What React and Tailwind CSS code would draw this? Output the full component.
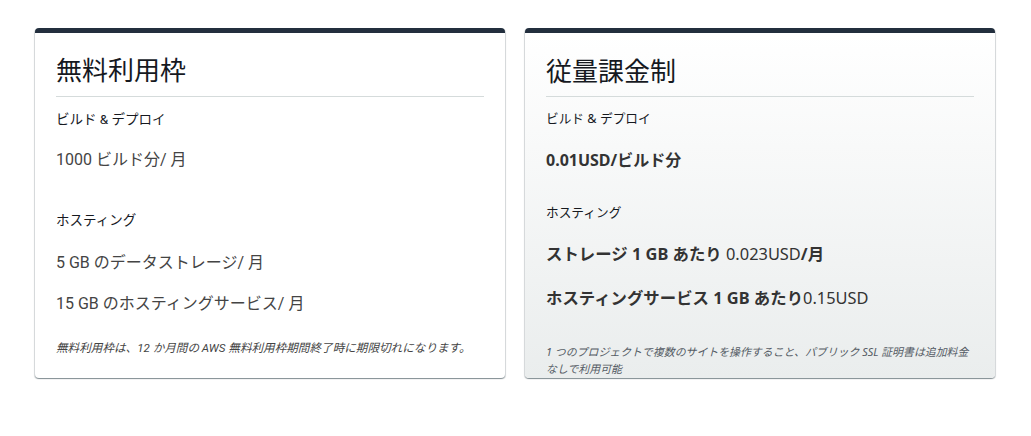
const cardShadow =
  "shadow-[0_1px_1px_0_rgba(0,28,36,0.3),1px_1px_1px_0_rgba(0,28,36,0.15),-1px_1px_1px_0_rgba(0,28,36,0.15)]";

function FreeTier() {
  return (
    <div
      className={`flex h-[350px] w-[470px] flex-col overflow-hidden rounded-[4px] border-t-[5px] border-[#232f3e] bg-white px-[21px] pt-[20px] ${cardShadow}`}
      style={{ fontFamily: 'Roboto, "Noto Sans CJK JP", sans-serif' }}
    >
      <h2 className="text-[26px] leading-[36px] text-[#16191f]">無料利用枠</h2>
      <div className="mt-[7px] h-px bg-[#d5dbdb]" />
      <p className="mt-[12px] text-[13.5px] leading-[20px] text-[#16191f]">
        ビルド &amp; デプロイ
      </p>
      <p className="mt-[19px] text-[16px] leading-[24px] text-[#444]">
        1000 ビルド分/ 月
      </p>
      <p className="mt-[38px] text-[13.5px] leading-[20px] text-[#16191f]">
        ホスティング
      </p>
      <p className="mt-[21px] text-[16px] leading-[24px] text-[#444]">
        5 GB のデータストレージ/ 月
      </p>
      <p className="mt-[17px] text-[16px] leading-[24px] text-[#444]">
        15 GB のホスティングサービス/ 月
      </p>
      <p className="mt-[24px] text-[11.6px] italic leading-[16px] text-[#444]">
        無料利用枠は、12 か月間の AWS 無料利用枠期間終了時に期限切れになります。
      </p>
    </div>
  );
}

function PayAsYouGo() {
  return (
    <div
      className={`flex h-[350px] w-[470px] flex-col overflow-hidden rounded-[4px] border-t-[5px] border-[#232f3e] bg-gradient-to-b from-white to-[#eaeded] px-[21px] pt-[20px] ${cardShadow}`}
      style={{ fontFamily: '"Noto Sans", "Noto Sans CJK JP", sans-serif' }}
    >
      <h2 className="text-[26px] leading-[36px] text-[#16191f]">従量課金制</h2>
      <div className="mt-[7px] h-px bg-[#d5dbdb]" />
      <p className="mt-[11px] text-[12.7px] leading-[20px] text-[#16191f]">
        ビルド &amp; デプロイ
      </p>
      <p className="mt-[20px] text-[16px] font-bold leading-[24px] text-[#333]">
        0.01USD/ビルド分
      </p>
      <p className="mt-[30px] text-[12.7px] leading-[20px] text-[#16191f]">
        ホスティング
      </p>
      <p className="mt-[20px] text-[16.4px] leading-[24px] text-[#333]">
        <span className="font-bold">ストレージ 1 GB あたり</span> 0.023USD<span className="font-bold">/月</span>
      </p>
      <p className="mt-[20px] text-[16.4px] leading-[24px] text-[#333]">
        <span className="font-bold">ホスティングサービス 1 GB あたり</span>0.15USD
      </p>
      <p className="mt-[33px] text-[10.9px] italic leading-[17px] text-[#545b64]">
        1 つのプロジェクトで複数のサイトを操作すること、パブリック SSL 証明書は追加料金なしで利用可能
      </p>
    </div>
  );
}

export default function App() {
  return (
    <div className="min-h-[436px] bg-white px-[35px] pt-[28px]">
      <div className="flex gap-[20px]">
        <FreeTier />
        <PayAsYouGo />
      </div>
    </div>
  );
}
